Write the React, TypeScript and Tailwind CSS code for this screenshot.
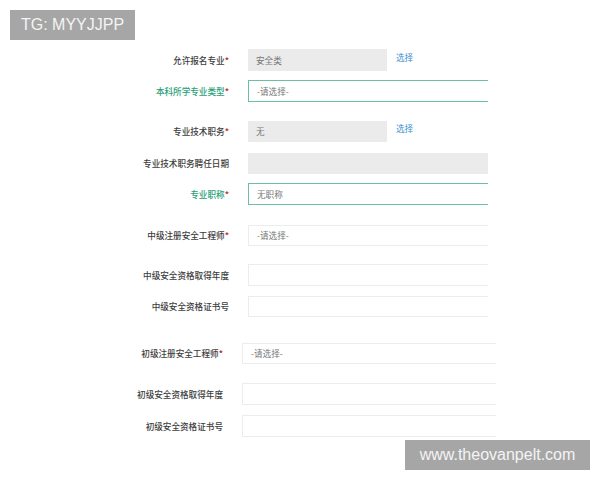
import React from 'react';

type Row = {
  label: string;
  required?: boolean;
  green?: boolean;
  kind: 'gray' | 'grayShort' | 'green' | 'plain';
  value?: string;
  top: number;
  h: number;
  group: 'a' | 'b';
};

const rows: Row[] = [
  { label: '允许报名专业', required: true, kind: 'grayShort', value: '安全类', top: 49, h: 22, group: 'a' },
  { label: '本科所学专业类型', required: true, green: true, kind: 'green', value: '-请选择-', top: 9, h: 22, group: 'a' },
  { label: '专业技术职务', required: true, kind: 'grayShort', value: '无', top: 19, h: 21, group: 'a' },
  { label: '专业技术职务聘任日期', kind: 'gray', top: 11, h: 21, group: 'a' },
  { label: '专业职称', required: true, green: true, kind: 'green', value: '无职称', top: 9, h: 22, group: 'a' },
  { label: '中级注册安全工程师', required: true, kind: 'plain', value: '-请选择-', top: 20, h: 21, group: 'a' },
  { label: '中级安全资格取得年度', kind: 'plain', top: 18, h: 22, group: 'a' },
  { label: '中级安全资格证书号', kind: 'plain', top: 10, h: 21, group: 'a' },
  { label: '初级注册安全工程师', required: true, kind: 'plain', value: '-请选择-', top: 26, h: 21, group: 'b' },
  { label: '初级安全资格取得年度', kind: 'plain', top: 19, h: 22, group: 'b' },
  { label: '初级安全资格证书号', kind: 'plain', top: 10, h: 22, group: 'b' },
];

const fieldClass = (kind: Row['kind']) => {
  if (kind === 'grayShort') return 'w-[139px] bg-[#ebebeb]';
  if (kind === 'gray') return 'w-[240px] bg-[#ebebeb]';
  if (kind === 'green') return 'w-[240px] bg-white border border-r-0 border-[#6cc0a2]';
  return 'bg-white border border-r-0 border-[#ececec]';
};

const App: React.FC = () => {
  return (
    <div
      className="relative w-[600px] h-[480px] bg-white overflow-hidden"
      style={{ fontFamily: '"Noto Sans CJK SC", "Noto Sans", sans-serif' }}
    >
      {/* Form rows */}
      <div className="flex flex-col">
        {rows.map(row => (
          <div
            key={row.label}
            className="flex items-center"
            style={{ marginTop: row.top, height: row.h }}
          >
            <div
              className={`text-right text-[8.6px] leading-none font-medium ${
                row.group === 'a' ? 'w-[229px]' : 'w-[223px]'
              } ${row.green ? 'text-[#2aa07a]' : 'text-[#3d3d3d]'}`}
            >
              {row.label}
              {row.required && <span className="text-[#c62f2b] font-bold">*</span>}
            </div>
            <div
              className={`ml-[19px] h-full flex items-center pl-[8px] text-[8.6px] text-[#777] ${fieldClass(row.kind)} ${
                row.kind === 'plain' ? (row.group === 'a' ? 'w-[240px]' : 'w-[254px]') : ''
              }`}
            >
              {row.value}
            </div>
            {row.kind === 'grayShort' && (
              <span className="ml-[9px] -mt-[6px] text-[8.6px] text-[#3b8fd0]">选择</span>
            )}
          </div>
        ))}
      </div>

      {/* Watermarks */}
      <div
        className="absolute left-[10px] top-[10px] w-[125px] h-[30px] bg-[#a6a6a6] text-[#f4f4f4] text-[16px] flex items-center justify-center"
        style={{ fontFamily: '"Liberation Sans", Arial, sans-serif' }}
      >
        TG: MYYJJPP
      </div>
      <div
        className="absolute left-[405px] top-[440px] w-[185px] h-[30px] bg-[#a6a6a6] text-[#f4f4f4] text-[16px] flex items-center justify-center"
        style={{ fontFamily: '"Liberation Sans", Arial, sans-serif' }}
      >
        www.theovanpelt.com
      </div>
    </div>
  );
};

export default App;
